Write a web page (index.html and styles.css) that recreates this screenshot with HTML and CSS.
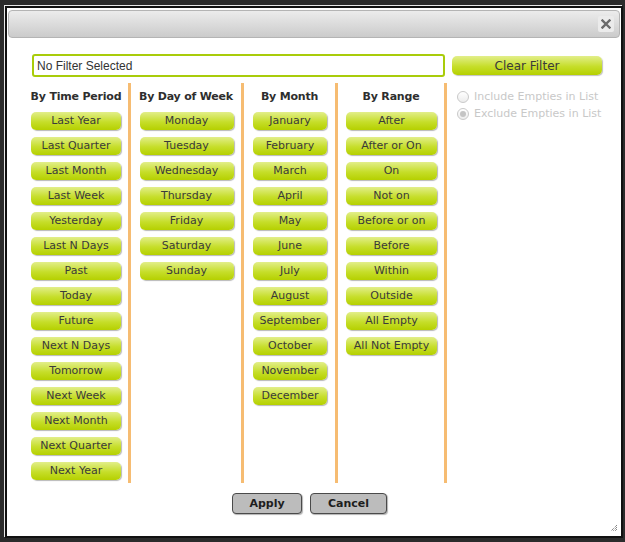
FILE: index.html
```html
<!DOCTYPE html>
<html>
<head>
<meta charset="utf-8">
<link rel="stylesheet" href="styles.css">
</head>
<body>
<div class="dialog">
  <div class="titlebar">
    <span class="close">
      <svg width="10" height="10" viewBox="0 0 10 10"><path d="M1.5 1.5 L8.5 8.5 M8.5 1.5 L1.5 8.5" stroke="#6a6a6a" stroke-width="2.4" stroke-linecap="square"/></svg>
    </span>
  </div>
  <div class="filter-row">
    <div class="filter-input">No Filter Selected</div>
    <div class="clear-btn">Clear Filter</div>
  </div>
  <div class="columns">
    <div class="col col1">
      <div class="col-head">By Time Period</div>
      <div class="gbtn">Last Year</div>
      <div class="gbtn">Last Quarter</div>
      <div class="gbtn">Last Month</div>
      <div class="gbtn">Last Week</div>
      <div class="gbtn">Yesterday</div>
      <div class="gbtn">Last N Days</div>
      <div class="gbtn">Past</div>
      <div class="gbtn">Today</div>
      <div class="gbtn">Future</div>
      <div class="gbtn">Next N Days</div>
      <div class="gbtn">Tomorrow</div>
      <div class="gbtn">Next Week</div>
      <div class="gbtn">Next Month</div>
      <div class="gbtn">Next Quarter</div>
      <div class="gbtn">Next Year</div>
    </div>
    <div class="col col2">
      <div class="col-head">By Day of Week</div>
      <div class="gbtn">Monday</div>
      <div class="gbtn">Tuesday</div>
      <div class="gbtn">Wednesday</div>
      <div class="gbtn">Thursday</div>
      <div class="gbtn">Friday</div>
      <div class="gbtn">Saturday</div>
      <div class="gbtn">Sunday</div>
    </div>
    <div class="col col3">
      <div class="col-head">By Month</div>
      <div class="gbtn">January</div>
      <div class="gbtn">February</div>
      <div class="gbtn">March</div>
      <div class="gbtn">April</div>
      <div class="gbtn">May</div>
      <div class="gbtn">June</div>
      <div class="gbtn">July</div>
      <div class="gbtn">August</div>
      <div class="gbtn">September</div>
      <div class="gbtn">October</div>
      <div class="gbtn">November</div>
      <div class="gbtn">December</div>
    </div>
    <div class="col col4">
      <div class="col-head">By Range</div>
      <div class="gbtn">After</div>
      <div class="gbtn">After or On</div>
      <div class="gbtn">On</div>
      <div class="gbtn">Not on</div>
      <div class="gbtn">Before or on</div>
      <div class="gbtn">Before</div>
      <div class="gbtn">Within</div>
      <div class="gbtn">Outside</div>
      <div class="gbtn">All Empty</div>
      <div class="gbtn">All Not Empty</div>
    </div>
    <div class="col5">
      <div class="radio-row"><span class="radio"></span><span class="radio-label">Include Empties in List</span></div>
      <div class="radio-row"><span class="radio checked"></span><span class="radio-label">Exclude Empties in List</span></div>
    </div>
  </div>
  <div class="actions">
    <div class="abtn apply">Apply</div>
    <div class="abtn cancel">Cancel</div>
  </div>
  <div class="grip">
    <svg width="8" height="8" viewBox="0 0 8 8">
      <path d="M7 1 L1 7 M7 3 L3 7 M7 5 L5 7" stroke="#555" stroke-width="1" stroke-dasharray="1 1"/>
    </svg>
  </div>
</div>
</body>
</html>
```

FILE: styles.css
```css
html, body {
  margin: 0;
  padding: 0;
}
body {
  background: #2b2b2b;
  width: 625px;
  height: 542px;
  overflow: hidden;
  font-family: "DejaVu Sans", Verdana, sans-serif;
}
.dialog {
  position: relative;
  margin: 6px 0 0 5px;
  width: 614px;
  height: 528px;
  border: 2px solid #111;
  background: #fff;
  box-shadow: -1px -1px 0 0 #e8e8e8;
}
.titlebar {
  margin: 2px 1px 0 1px;
  height: 26px;
  border: 1px solid #b4b4b4;
  border-radius: 4px;
  background: linear-gradient(#ececec, #cbcbcb);
  display: flex;
  justify-content: flex-end;
  align-items: center;
  padding-right: 5px;
}
.close {
  width: 16px;
  height: 16px;
  border-radius: 2px;
  background: #ebebeb;
  display: flex;
  align-items: center;
  justify-content: center;
}
.filter-row {
  display: flex;
  margin-top: 16px;
  padding-left: 25px;
  align-items: flex-start;
}
.filter-input {
  box-sizing: border-box;
  width: 413px;
  height: 23px;
  border: 2px solid #a9cc0a;
  border-radius: 3px;
  font-family: "Liberation Sans", Arial, sans-serif;
  font-size: 12px;
  color: #333;
  line-height: 21px;
  padding-left: 3px;
}
.clear-btn {
  margin-left: 7px;
  margin-top: 2px;
  width: 150px;
  height: 19px;
  line-height: 21px;
  text-align: center;
  font-size: 12px;
  color: #3a3a3a;
  border-radius: 5px;
  background: linear-gradient(#e2ee8a, #c6de2a 55%, #b5d000);
  box-shadow: 1px 1px 1px rgba(0,0,0,0.25);
}
.columns {
  display: flex;
  margin-top: 6px;
  margin-left: 17px;
  height: 400px;
}
.col {
  display: flex;
  flex-direction: column;
  align-items: center;
  height: 400px;
  border-right: 3px solid #f6bc72;
}
.col > * { flex-shrink: 0; }
.col1 { width: 104px; }
.col2 { width: 110px; }
.col3 { width: 91px; }
.col4 { width: 106px; }
.col1 .gbtn { width: 90px; }
.col2 .gbtn { width: 94px; margin-left: 1px; }
.col3 .gbtn { width: 74px; margin-left: 1px; }
.col4 .gbtn { width: 91px; margin-left: 1px; }
.col-head {
  height: 29px;
  line-height: 27px;
  font-size: 11px;
  font-weight: bold;
  color: #2e2e2e;
  letter-spacing: -0.2px;
  white-space: nowrap;
}
.gbtn {
  height: 18px;
  line-height: 18px;
  margin-bottom: 7px;
  text-align: center;
  font-size: 11px;
  color: #3a3a3a;
  border-radius: 5px;
  background: linear-gradient(#e2ee8a, #c6de2a 55%, #b5d000);
  box-shadow: 1px 1px 1px rgba(0,0,0,0.28);
  white-space: nowrap;
}
.col5 {
  padding-left: 10px;
  padding-top: 5px;
}
.radio-row {
  display: flex;
  align-items: center;
  height: 17px;
}
.radio {
  box-sizing: border-box;
  width: 12px;
  height: 12px;
  border-radius: 50%;
  border: 1px solid #c9c9c9;
  background: linear-gradient(#fff, #ececec);
  margin-right: 5px;
  position: relative;
}
.radio.checked::after {
  content: "";
  position: absolute;
  left: 2px;
  top: 2px;
  width: 6px;
  height: 6px;
  border-radius: 50%;
  background: #c4c4c4;
}
.radio-label {
  font-size: 11px;
  color: #c8c8c8;
  white-space: nowrap;
}
.actions {
  display: flex;
  margin-top: 10px;
  padding-left: 225px;
  gap: 8px;
}
.abtn {
  box-sizing: border-box;
  height: 21px;
  line-height: 20px;
  text-align: center;
  font-size: 11px;
  font-weight: bold;
  color: #1e1e1e;
  background: #bcbcbc;
  border: 1px solid #4a4a4a;
  border-radius: 4px;
  box-shadow: 1px 1px 1px rgba(0,0,0,0.3);
}
.apply { width: 70px; }
.cancel { width: 77px; }
.grip {
  position: absolute;
  right: 3px;
  bottom: 4px;
  width: 8px;
  height: 8px;
}
.grip svg { display: block; }
```
